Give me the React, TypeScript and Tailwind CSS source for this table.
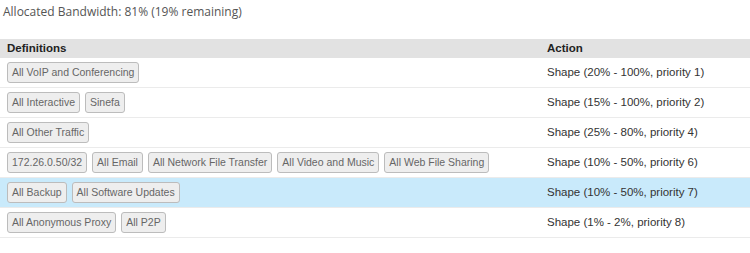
const rows: { defs: string[]; action: string; active?: boolean }[] = [
  { defs: ['All VoIP and Conferencing'], action: 'Shape (20% - 100%, priority 1)' },
  { defs: ['All Interactive', 'Sinefa'], action: 'Shape (15% - 100%, priority 2)' },
  { defs: ['All Other Traffic'], action: 'Shape (25% - 80%, priority 4)' },
  {
    defs: ['172.26.0.50/32', 'All Email', 'All Network File Transfer', 'All Video and Music', 'All Web File Sharing'],
    action: 'Shape (10% - 50%, priority 6)',
  },
  { defs: ['All Backup', 'All Software Updates'], action: 'Shape (10% - 50%, priority 7)', active: true },
  { defs: ['All Anonymous Proxy', 'All P2P'], action: 'Shape (1% - 2%, priority 8)' },
]

export default function App() {
  return (
    <div className="w-[750px] h-[253px] bg-white overflow-hidden font-['Liberation_Sans',Arial,sans-serif]">
      <p className="pt-[3px] pl-[3px] h-[39px] text-[12px] text-[#555] font-['Open_Sans',sans-serif]">
        Allocated Bandwidth: 81% (19% remaining)
      </p>
      <div className="flex h-[19px] items-center bg-[#e2e2e2] text-[11.5px] font-bold text-[#222]">
        <div className="w-[547px] pl-[7px]">Definitions</div>
        <div>Action</div>
      </div>
      {rows.map((r, i) => (
        <div
          key={i}
          className={`flex h-[30px] items-center border-b border-[#ebebeb] ${r.active ? 'bg-[#c9eafb]' : ''}`}
        >
          <div className="w-[547px] flex gap-[5px] pl-[7px]">
            {r.defs.map((d) => (
              <span
                key={d}
                className="h-[21px] flex items-center px-[4px] text-[10.5px] text-[#666] bg-[#eeeeee] border border-[#bcbcbc] rounded-[3px]"
              >
                {d}
              </span>
            ))}
          </div>
          <div className="text-[11.5px] text-[#333]">{r.action}</div>
        </div>
      ))}
    </div>
  )
}
